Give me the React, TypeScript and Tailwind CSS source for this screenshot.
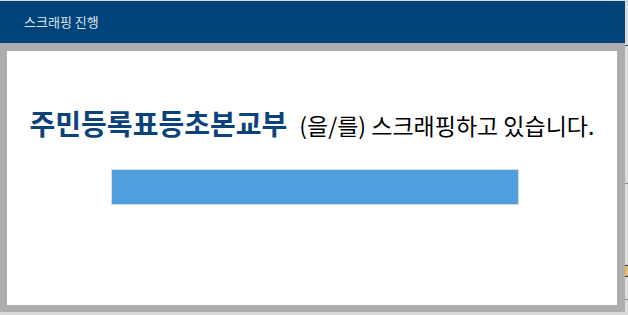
export default function App() {
  return (
    <div
      className="flex h-[315px] w-[628px] flex-col bg-[#d9d9d9]"
      style={{ fontFamily: '"Noto Sans CJK KR", "Noto Sans", sans-serif' }}
    >
      <div className="mt-px flex">
        <div className="flex w-[625px] flex-col">
          <div className="flex h-[42px] items-center bg-[#00427a] pl-6 text-[13px] text-[#dde5ee]">
            스크래핑 진행
          </div>
          <div className="bg-[#adadad] pb-[7px] pl-[7px] pr-[8px] pt-[8px]">
            <div className="flex h-[254px] flex-col items-center bg-white">
              <div className="mt-[56px] flex h-[32px] items-baseline">
                <span className="text-[28px] font-bold leading-[32px] text-[#0b4279]">
                  주민등록표등초본교부
                </span>
                <span className="ml-[12px] text-[23px] leading-[32px] text-black">
                  (을/를) 스크래핑하고 있습니다.
                </span>
              </div>
              <div className="ml-[6px] mt-[30px] h-[36px] w-[408px] border border-[#dcdcdc] bg-[#4d9fe0]" />
            </div>
          </div>
        </div>
        <div className="relative w-[3px] bg-[#dcdcdc]">
          <div className="absolute left-0 top-[44px] h-px w-[3px] bg-[#555]" />
          <div className="absolute left-0 top-[182px] h-px w-[3px] bg-[#888]" />
          <div className="absolute left-0 top-[264px] h-[12px] w-[3px] border-y border-[#333] bg-[#e0c070]" />
          <div className="absolute left-0 top-[298px] h-px w-[3px] bg-[#888]" />
        </div>
      </div>
    </div>
  );
}
